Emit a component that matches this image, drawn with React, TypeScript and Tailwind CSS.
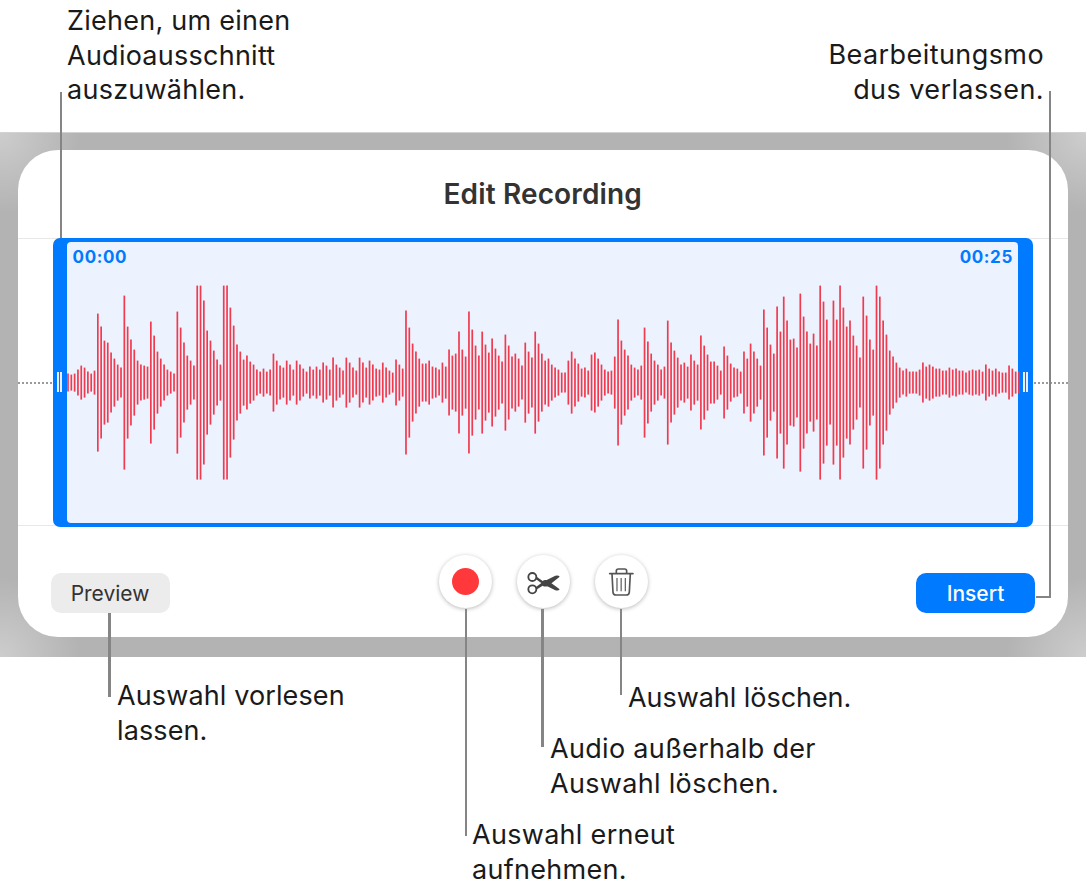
import React from "react";

const amps: number[] = [
  9,8,9,13,17,15,11,9,12,69,56,42,40,30,24,18,15,87,56,43,33,22,18,17,16,61,47,31,24,18,13,11,9,71,55,40,27,22,17,97,97,82,52,42,32,23,18,97,97,75,57,38,31,23,27,21,18,13,11,14,11,13,29,22,17,15,22,18,13,22,18,14,11,16,
  13,16,13,20,17,13,25,18,15,12,25,20,15,12,25,20,15,22,18,14,13,20,15,12,10,23,18,14,72,55,39,31,24,19,19,22,16,15,13,20,16,33,27,29,51,33,26,71,53,37,27,51,38,30,44,34,27,21,48,37,26,29,24,17,40,31,25,51,39,29,22,24,18,15,13,
  10,10,22,31,24,19,14,15,12,28,30,24,18,13,11,12,26,63,42,33,27,18,15,13,17,55,41,29,22,18,13,16,62,40,32,25,18,20,16,28,22,18,47,37,28,21,21,17,12,36,27,19,15,14,11,31,24,39,31,24,17,73,55,38,29,76,51,86,62,43,44,35,89,66,51,39,
  49,37,97,81,63,42,82,63,97,75,56,62,47,37,25,86,67,43,33,97,86,62,48,32,26,20,15,12,14,11,11,11,13,20,16,18,16,14,14,12,12,15,13,14,12,12,10,12,13,12,13,11,18,14,12,14,11,10,10,17,14,11,11,
];

const LABEL = "absolute text-[27px] leading-[34.5px] text-[#1a1a1a] whitespace-nowrap";
const LEADER = "absolute bg-[#858585]";

function Waveform() {
  const step = 951 / (amps.length - 1);
  return (
    <svg className="absolute left-0 top-0" width="953" height="281" viewBox="0 0 953 281">
      {amps.map((a, i) => {
        const x = 1 + i * step;
        return <line key={i} x1={x} x2={x} y1={140.6 - a} y2={140.6 + a} stroke="#f03a4e" strokeWidth="1.7" />;
      })}
    </svg>
  );
}

function Handle() {
  return (
    <div className="w-[14.6px] flex items-center justify-center gap-[1px] shrink-0">
      <div className="w-[2px] h-[20px] bg-[#e4efff]" />
      <div className="w-[2px] h-[20px] bg-[#e4efff]" />
    </div>
  );
}

function Scissors() {
  return (
    <svg width="36.7" height="26.7" viewBox="375 145 110 80" fill="none">
      <circle cx="397" cy="172" r="12" stroke="#444" strokeWidth="5.5" />
      <circle cx="397" cy="209" r="12" stroke="#444" strokeWidth="5.5" />
      <path d="M407 203 L428 187 L466 168 Q476 166 479 171 L444 199 Q434 203 428 198 L411 209 Z" fill="#444" />
      <path d="M407 178 L428 193 L466 212 Q476 214 479 209 L444 183 Q434 179 428 184 L411 172 Z" fill="#444" />
    </svg>
  );
}

function Trash() {
  return (
    <svg width="28.3" height="30" viewBox="620 140 85 90" fill="none" stroke="#555">
      <path d="M628 160 H698" strokeWidth="5" strokeLinecap="round" />
      <path d="M648 159 V152 Q648 146 654 146 H673 Q679 146 679 152 V159" strokeWidth="5" />
      <path d="M635 160 L638 216 Q639 224 647 224 H678 Q686 224 687 216 L690 160" strokeWidth="5" />
      <path d="M650 173 V213 M662.5 173 V213 M675 173 V213" strokeWidth="3.5" />
    </svg>
  );
}

function RoundButton({ children }: { children: React.ReactNode }) {
  return (
    <div className="w-[53px] h-[53px] rounded-full bg-white shadow-[0_1px_4px_rgba(0,0,0,0.28)] flex items-center justify-center">
      {children}
    </div>
  );
}

export default function App() {
  return (
    <div className="relative w-[1087px] h-[892px] bg-white overflow-hidden font-['Inter',sans-serif]">
      <div className="pt-[132px]">
        <div className="w-[1085.5px] h-[525px] pt-[17px] pl-[17.5px] border-t border-[#d2d2d2] bg-[#b3b3b3] bg-[radial-gradient(circle_at_0%_0%,#cdcdcd_0,transparent_80px),radial-gradient(circle_at_100%_0%,#cdcdcd_0,transparent_80px),radial-gradient(circle_at_0%_100%,#cdcdcd_0,transparent_80px),radial-gradient(circle_at_100%_100%,#cdcdcd_0,transparent_80px)]">
          <div className="w-[1050.5px] h-[487px] rounded-[40px] bg-white flex flex-col">
            <div className="h-[88px] flex items-center justify-center text-[28px] tracking-[0.15px] font-semibold text-[#333333]">
              Edit Recording
            </div>
            <div className="relative h-[288px] px-[35px] border-y border-[#e8e8e8] flex">
              <div className="absolute left-0 right-0 top-[142.5px] border-t-2 border-dotted border-[#9a9a9a]" />
              <div className="relative w-[981px] -mt-[1px] h-[288.5px] bg-[#007aff] rounded-[7px] flex pt-[3.5px] pb-[4px]">
                <Handle />
                <div className="relative flex-1 bg-[#ecf2fe] rounded-[4px] flex justify-between pl-[5.5px] pr-[5.5px] pt-[5px] text-[17px] leading-[20px] font-bold text-[#007aff] tracking-[0.6px]">
                  <Waveform />
                  <span className="relative">00:00</span>
                  <span className="relative">00:25</span>
                </div>
                <Handle />
              </div>
            </div>
            <div className="relative flex-1 px-[33px] grid grid-cols-[1fr_auto_1fr]">
              <div className="pt-[47px]">
                <div className="w-[119px] h-[40px] pt-[2px] rounded-[10px] bg-[#ececec] flex items-center justify-center text-[21px] font-normal text-[#333333]">
                  Preview
                </div>
              </div>
              <div className="flex gap-[25px] pt-[29px] ml-[1px] items-start">
                <RoundButton>
                  <div className="w-[27px] h-[27px] rounded-full bg-[#ff383c]" />
                </RoundButton>
                <RoundButton>
                  <Scissors />
                </RoundButton>
                <RoundButton>
                  <Trash />
                </RoundButton>
              </div>
              <div className="pt-[47px] flex justify-end">
                <div className="w-[119px] h-[40px] pt-[2px] rounded-[10px] bg-[#007aff] flex items-center justify-center text-[21px] font-medium text-white">
                  Insert
                </div>
              </div>
            </div>
          </div>
        </div>
      </div>

      {/* leaders */}
      <div className={`${LEADER} left-[59.5px] top-[92px] w-[2.5px] h-[146px]`} />
      <div className={`${LEADER} left-[1048.5px] top-[91px] w-[2.5px] h-[507px]`} />
      <div className={`${LEADER} left-[1036px] top-[595.5px] w-[15px] h-[2.5px]`} />
      <div className={`${LEADER} left-[108px] top-[613px] w-[2.5px] h-[84px]`} />
      <div className={`${LEADER} left-[464.5px] top-[609px] w-[2.5px] h-[227px]`} />
      <div className={`${LEADER} left-[541px] top-[609px] w-[2.5px] h-[138px]`} />
      <div className={`${LEADER} left-[619.5px] top-[609px] w-[2.5px] h-[86px]`} />

      {/* labels */}
      <div className={`${LABEL} left-[67px] top-[4px] tracking-[0.25px]`}>
        Ziehen, um einen
        <br />
        Audioausschnitt
        <br />
        auszuwählen.
      </div>
      <div className={`${LABEL} right-[43px] top-[38px] text-right tracking-[0.42px]`}>
        Bearbeitungsmo
        <br />
        dus verlassen.
      </div>
      <div className={`${LABEL} left-[117px] top-[679px] tracking-[0.12px]`}>
        Auswahl vorlesen
        <br />
        lassen.
      </div>
      <div className={`${LABEL} left-[628px] top-[681px] tracking-[-0.05px]`}>Auswahl löschen.</div>
      <div className={`${LABEL} left-[550px] top-[732px] tracking-[0.32px]`}>
        Audio außerhalb der
        <br />
        Auswahl löschen.
      </div>
      <div className={`${LABEL} left-[472px] top-[818px] tracking-[0.3px]`}>
        Auswahl erneut
        <br />
        aufnehmen.
      </div>
    </div>
  );
}
